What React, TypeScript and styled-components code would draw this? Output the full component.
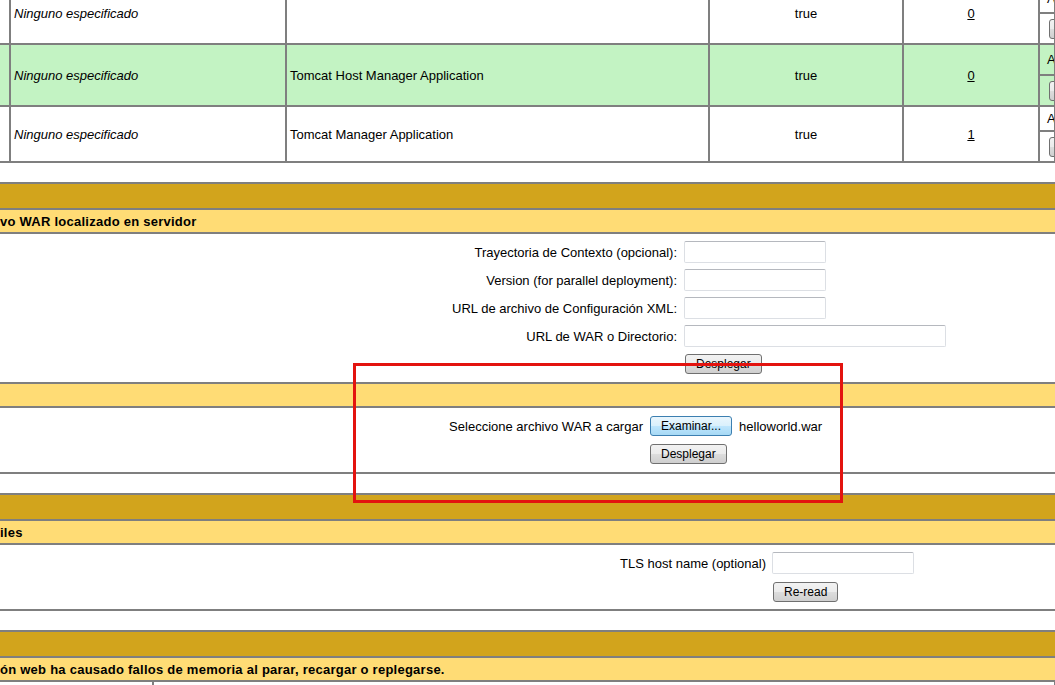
import styled, { createGlobalStyle } from 'styled-components';

const line = '#7f7f7f';

const GlobalStyle = createGlobalStyle`
  html, body {
    margin: 0;
    padding: 0;
    background: #fff;
    overflow: hidden;
  }
  body {
    font-family: "Liberation Sans", Arial, sans-serif;
    font-size: 13px;
    color: #000;
  }
`;

type AppEntry = {
    name: string;
    running: string;
    sessions: number;
    height: number;
    green?: boolean;
    split: [number, number];
};

const apps: AppEntry[] = [
    { name: '', running: 'true', sessions: 0, height: 61, split: [30, 31] },
    { name: 'Tomcat Host Manager Application', running: 'true', sessions: 0, height: 62, green: true, split: [31, 31] },
    { name: 'Tomcat Manager Application', running: 'true', sessions: 1, height: 56, split: [25, 31] },
];

export default function App() {
    return (
        <Styled.Page>
            <GlobalStyle />
            <Styled.Scrolled>
                <Styled.AppsTable>
                    {apps.map((app, i) => (
                        <Styled.AppRow key={i} $height={app.height} $green={app.green}>
                            <Styled.Cell $noLeft />
                            <Styled.Cell $italic>Ninguno especificado</Styled.Cell>
                            <Styled.Cell>{app.name}</Styled.Cell>
                            <Styled.Cell $center>{app.running}</Styled.Cell>
                            <Styled.Cell $center>
                                <Styled.SessionLink href="#">{app.sessions}</Styled.SessionLink>
                            </Styled.Cell>
                            <Styled.Commands>
                                <Styled.SubCell $height={app.split[0]}>Arrancar&nbsp;&nbsp;Parar</Styled.SubCell>
                                <Styled.SubCell $height={app.split[1]}>
                                    <Styled.Button $small>Expirar sesiones</Styled.Button>
                                </Styled.SubCell>
                            </Styled.Commands>
                        </Styled.AppRow>
                    ))}
                </Styled.AppsTable>

                <Styled.Section>
                    <Styled.TitleBand />
                    <Styled.HeaderBand>vo WAR localizado en servidor</Styled.HeaderBand>
                    <Styled.Body $height={148}>
                        <Styled.FormGrid $label={677} $gap={7} $rowGap={6} $top={7}>
                            <Styled.Label>Trayectoria de Contexto (opcional):</Styled.Label>
                            <Styled.TextInput $width={142} />
                            <Styled.Label>Version (for parallel deployment):</Styled.Label>
                            <Styled.TextInput $width={142} />
                            <Styled.Label>URL de archivo de Configuración XML:</Styled.Label>
                            <Styled.TextInput $width={142} />
                            <Styled.Label>URL de WAR o Directorio:</Styled.Label>
                            <Styled.TextInput $width={262} />
                            <Styled.FormAction $nudge={1} $top={1}>
                                <Styled.Button>Desplegar</Styled.Button>
                            </Styled.FormAction>
                        </Styled.FormGrid>
                    </Styled.Body>
                    <Styled.HeaderBand />
                    <Styled.Body $height={64}>
                        <Styled.FormGrid $label={643} $gap={7} $rowGap={8} $top={8}>
                            <Styled.Label>Seleccione archivo WAR a cargar</Styled.Label>
                            <Styled.FileField>
                                <Styled.Button $active>Examinar...</Styled.Button>
                                <span>helloworld.war</span>
                            </Styled.FileField>
                            <Styled.FormAction>
                                <Styled.Button>Desplegar</Styled.Button>
                            </Styled.FormAction>
                        </Styled.FormGrid>
                    </Styled.Body>
                </Styled.Section>

                <Styled.Section>
                    <Styled.TitleBand />
                    <Styled.HeaderBand>iles</Styled.HeaderBand>
                    <Styled.Body $height={64}>
                        <Styled.FormGrid $label={766} $gap={6} $rowGap={8} $top={7}>
                            <Styled.Label>TLS host name (optional)</Styled.Label>
                            <Styled.TextInput $width={142} />
                            <Styled.FormAction $nudge={1}>
                                <Styled.Button>Re-read</Styled.Button>
                            </Styled.FormAction>
                        </Styled.FormGrid>
                    </Styled.Body>
                </Styled.Section>

                <Styled.Section>
                    <Styled.TitleBand />
                    <Styled.HeaderBand>ón web ha causado fallos de memoria al parar, recargar o replegarse.</Styled.HeaderBand>
                    <Styled.DiagRow>
                        <Styled.Cell $noLeft />
                        <Styled.Cell />
                    </Styled.DiagRow>
                </Styled.Section>
            </Styled.Scrolled>

            <Styled.Highlight />
        </Styled.Page>
    );
}

const Styled = {
    Page: styled.div`
        position: relative;
        width: 1055px;
        height: 685px;
        overflow: hidden;
    `,
    // the page is scrolled a little: the first row starts above the window
    Scrolled: styled.div`
        margin-top: -18px;
    `,
    AppsTable: styled.div`
        border-top: 1px solid ${line};
        border-bottom: 1px solid ${line};
    `,
    AppRow: styled.div<{ $height: number; $green?: boolean }>`
        display: grid;
        grid-template-columns: 10px 276px 423px 194px 136px 1fr;
        height: ${p => p.$height}px;
        background: ${p => (p.$green ? '#c3f3c3' : '#fff')};
    `,
    Cell: styled.div<{ $center?: boolean; $italic?: boolean; $noLeft?: boolean }>`
        display: flex;
        align-items: center;
        justify-content: ${p => (p.$center ? 'center' : 'flex-start')};
        min-width: 0;
        overflow: hidden;
        white-space: nowrap;
        padding: 0 3px;
        border: 1px solid ${line};
        border-left-width: ${p => (p.$noLeft ? 0 : 1)}px;
        font-style: ${p => (p.$italic ? 'italic' : 'normal')};
    `,
    SessionLink: styled.a`
        color: #000;
        text-decoration: underline;
    `,
    Commands: styled.div`
        display: flex;
        flex-direction: column;
        min-width: 0;
    `,
    SubCell: styled.div<{ $height: number }>`
        display: flex;
        align-items: center;
        height: ${p => p.$height}px;
        box-sizing: border-box;
        border: 1px solid ${line};
        padding: 0 7px;
        white-space: nowrap;
        overflow: hidden;
    `,
    Section: styled.section`
        margin-top: 19px;
        border-top: 1px solid ${line};
        border-bottom: 1px solid ${line};
    `,
    TitleBand: styled.div`
        height: 24px;
        background: #d2a41c;
        border-top: 1px solid ${line};
        border-bottom: 1px solid ${line};
    `,
    HeaderBand: styled.div`
        display: flex;
        align-items: center;
        height: 22px;
        background: #ffdc75;
        border-top: 1px solid ${line};
        border-bottom: 1px solid ${line};
        font-weight: bold;
        letter-spacing: 0.25px;
        white-space: nowrap;
    `,
    Body: styled.div<{ $height: number }>`
        height: ${p => p.$height}px;
        background: #fff;
        border-top: 1px solid ${line};
        border-bottom: 1px solid ${line};
    `,
    FormGrid: styled.div<{ $label: number; $gap: number; $rowGap: number; $top: number }>`
        display: grid;
        grid-template-columns: ${p => p.$label}px max-content;
        column-gap: ${p => p.$gap}px;
        row-gap: ${p => p.$rowGap}px;
        padding-top: ${p => p.$top}px;
        align-items: center;
    `,
    Label: styled.label`
        text-align: right;
        white-space: nowrap;
    `,
    TextInput: styled.input<{ $width: number }>`
        box-sizing: border-box;
        width: ${p => p.$width}px;
        height: 22px;
        margin: 0;
        padding: 0 3px;
        border: 1px solid #dcdfe4;
        border-top-color: #b5b8be;
        border-radius: 2px;
        background: #fff;
        font: inherit;
    `,
    FormAction: styled.div<{ $nudge?: number; $top?: number }>`
        grid-column: 2;
        display: flex;
        padding-left: ${p => p.$nudge ?? 0}px;
        margin-top: ${p => p.$top ?? 0}px;
    `,
    FileField: styled.div`
        display: flex;
        align-items: center;
        gap: 7px;
        white-space: nowrap;
    `,
    Button: styled.button<{ $active?: boolean; $small?: boolean }>`
        box-sizing: border-box;
        height: 20px;
        margin: 0 0 0 ${p => (p.$small ? 2 : 0)}px;
        padding: 0 10px;
        border: 1px solid ${p => (p.$active ? '#3c7fb1' : '#707070')};
        border-radius: 3px;
        background: ${p =>
            p.$active
                ? 'linear-gradient(#eaf6fd 0%, #d9f0fc 50%, #bee6fd 50%, #a7d9f5 100%)'
                : 'linear-gradient(#f2f2f2 0%, #ebebeb 50%, #dddddd 50%, #cfcfcf 100%)'};
        font-family: "Liberation Sans", Arial, sans-serif;
        font-size: 12px;
        color: #000;
        white-space: nowrap;
    `,
    DiagRow: styled.div`
        display: grid;
        grid-template-columns: 153px 1fr;
        height: 40px;
    `,
    Highlight: styled.div`
        position: absolute;
        left: 353px;
        top: 363px;
        width: 490px;
        height: 140px;
        box-sizing: border-box;
        border: 3px solid #e3130f;
        pointer-events: none;
    `,
};
